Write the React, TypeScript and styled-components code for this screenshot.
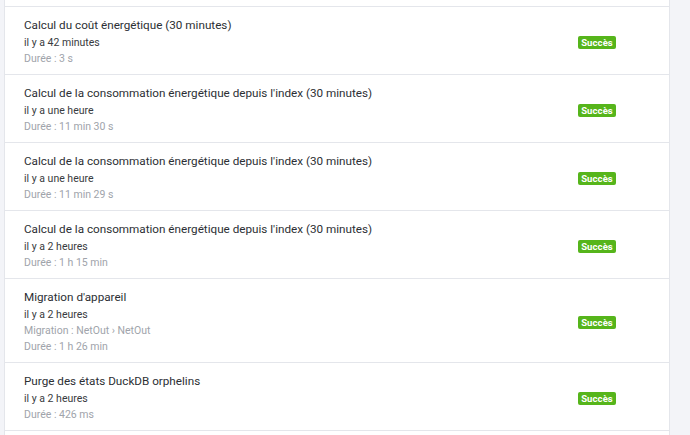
import React from "react";
import styled, { createGlobalStyle } from "styled-components";

const Global = createGlobalStyle`
  html, body { margin: 0; padding: 0; }
  body {
    background: #f3f4f8;
    font-family: Roboto, Inter, "Noto Sans", sans-serif;
    -webkit-font-smoothing: antialiased;
  }
`;

const Page = styled.div`
  height: 435px;
  overflow: hidden;
  padding-left: 4px;
  width: 690px;
  box-sizing: border-box;
`;

const Card = styled.div`
  width: 666px;
  box-sizing: border-box;
  background: #ffffff;
  border-left: 1px solid #e4e6eb;
  border-right: 1px solid #e4e6eb;
  padding-top: 6px;
  min-height: 460px;
`;

const Row = styled.div`
  display: flex;
  align-items: center;
  border-top: 1px solid #e4e6eb;
  padding: 9px 0 7px 19px;
  &:last-child {
    border-bottom: 1px solid #e4e6eb;
  }
`;

const Info = styled.div`
  flex: 1;
  min-width: 0;
`;

const Title = styled.div`
  font-size: 11.7px;
  line-height: 18px;
  color: #2c2f34;
`;

const When = styled.div`
  font-size: 10.5px;
  line-height: 17px;
  color: #383b40;
`;

const Muted = styled.div`
  font-size: 10.5px;
  line-height: 16px;
  color: #a0a4ab;
`;

const StatusCol = styled.div`
  width: 104px;
  margin-right: 20px;
  display: flex;
  justify-content: center;
  padding-top: 1px;
`;

const Badge = styled.span`
  display: inline-block;
  background: #56b51b;
  color: #ffffff;
  font-size: 9.5px;
  font-weight: 700;
  line-height: 13px;
  padding: 0 3.5px;
  border-radius: 2px;
  letter-spacing: 0.1px;
`;

type Job = { title: string; when: string; extra?: string; duration: string };

const jobs: Job[] = [
  { title: "Calcul du coût énergétique (30 minutes)", when: "il y a 42 minutes", duration: "Durée : 3 s" },
  { title: "Calcul de la consommation énergétique depuis l'index (30 minutes)", when: "il y a une heure", duration: "Durée : 11 min 30 s" },
  { title: "Calcul de la consommation énergétique depuis l'index (30 minutes)", when: "il y a une heure", duration: "Durée : 11 min 29 s" },
  { title: "Calcul de la consommation énergétique depuis l'index (30 minutes)", when: "il y a 2 heures", duration: "Durée : 1 h 15 min" },
  { title: "Migration d'appareil", when: "il y a 2 heures", extra: "Migration : NetOut › NetOut", duration: "Durée : 1 h 26 min" },
  { title: "Purge des états DuckDB orphelins", when: "il y a 2 heures", duration: "Durée : 426 ms" },
];

export default function App() {
  return (
    <Page>
      <Global />
      <Card>
        {jobs.map((j, i) => (
          <Row key={i}>
            <Info>
              <Title>{j.title}</Title>
              <When>{j.when}</When>
              {j.extra && <Muted>{j.extra}</Muted>}
              <Muted>{j.duration}</Muted>
            </Info>
            <StatusCol>
              <Badge>Succès</Badge>
            </StatusCol>
          </Row>
        ))}
      </Card>
    </Page>
  );
}
